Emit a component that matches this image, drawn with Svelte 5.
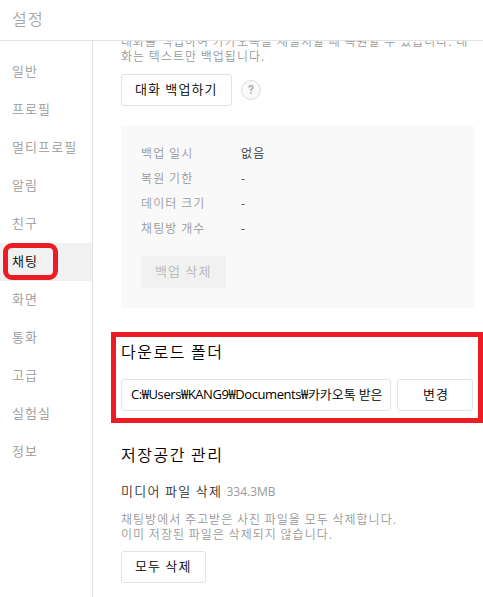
<script lang="ts">
  const menu = [
    "일반",
    "프로필",
    "멀티프로필",
    "알림",
    "친구",
    "채팅",
    "화면",
    "통화",
    "고급",
    "실험실",
    "정보",
  ];
  let active = $state("채팅");

  const backup = [
    { label: "백업 일시", value: "없음" },
    { label: "복원 기한", value: "-" },
    { label: "데이터 크기", value: "-" },
    { label: "채팅방 개수", value: "-" },
  ];
</script>

<div class="window">
  <header>설정</header>
  <div class="body">
    <nav>
      {#each menu as item}
        <button
          class="item"
          class:active={item === active}
          onclick={() => (active = item)}
        >
          {item}
          {#if item === "채팅"}<span class="mark"></span>{/if}
        </button>
      {/each}
    </nav>

    <main>
      <p class="desc intro">
        대화를 백업하여 카카오톡을 재설치할 때 복원할 수 있습니다. 대<br />화는
        텍스트만 백업됩니다.
      </p>
      <div class="row">
        <button class="btn backup">대화 백업하기</button>
        <span class="help">?</span>
      </div>

      <section class="panel">
        <dl>
          {#each backup as { label, value }}
            <dt>{label}</dt>
            <dd>{value}</dd>
          {/each}
        </dl>
        <button class="btn disabled" disabled>백업 삭제</button>
      </section>

      <section class="download">
        <h2>다운로드 폴더</h2>
        <div class="row folder">
          <div class="path">
            <span class="latin">C:₩Users₩KANG9₩Documents₩</span>카카오톡 받은
          </div>
          <button class="btn change">변경</button>
        </div>
        <span class="frame"></span>
      </section>

      <section class="storage">
        <h2>저장공간 관리</h2>
        <h3>미디어 파일 삭제 <span class="size">334.3MB</span></h3>
        <p class="desc">
          채팅방에서 주고받은 사진 파일을 모두 삭제합니다.<br />이미 저장된
          파일은 삭제되지 않습니다.
        </p>
        <button class="btn">모두 삭제</button>
      </section>
    </main>
  </div>
</div>

<style>
  :global(body) {
    overflow: hidden;
    background: #fff;
  }
  .window {
    display: flex;
    flex-direction: column;
    width: 483px;
    height: 597px;
    font-family: "Noto Sans CJK KR", sans-serif;
    font-weight: 350;
    color: #000;
  }
  .window * {
    box-sizing: border-box;
  }
  button {
    font: inherit;
    color: inherit;
  }
  h2,
  h3,
  p,
  dl,
  dd {
    margin: 0;
    font-weight: inherit;
  }

  header {
    flex: none;
    height: 41px;
    padding-left: 12px;
    border-bottom: 1px solid #e2e2e2;
    font-size: 16px;
    line-height: 37px;
    letter-spacing: 1.3px;
    color: #aaa;
  }
  .body {
    display: flex;
    flex: 1;
    min-height: 0;
  }

  nav {
    display: flex;
    flex: none;
    flex-direction: column;
    width: 93px;
    padding-top: 12px;
    border-right: 1px solid #e2e2e2;
  }
  .item {
    position: relative;
    flex: none;
    height: 38px;
    padding: 0 0 4px 12px;
    border: 0;
    background: none;
    font-size: 13px;
    letter-spacing: 1.1px;
    text-align: left;
    white-space: nowrap;
    color: #999;
  }
  .item.active {
    background: #f1f1f1;
    color: #000;
  }
  .mark {
    position: absolute;
    top: 0;
    left: 3px;
    width: 55px;
    height: 37px;
    border: 5px solid #ed1c24;
    border-radius: 9px;
  }

  main {
    flex: 1;
    min-width: 0;
    padding-left: 28px;
    overflow: hidden;
  }
  .row {
    display: flex;
    align-items: center;
  }
  .desc {
    font-size: 12px;
    line-height: 15px;
    letter-spacing: 1.02px;
    white-space: nowrap;
    color: #999;
  }
  .intro {
    margin-top: -8px;
    padding-bottom: 11px;
  }
  .btn {
    height: 32px;
    padding: 0 0 4px 13px;
    border: 1px solid #e2e2e2;
    border-radius: 3px;
    background: #fff;
    font-size: 13px;
    letter-spacing: 1.15px;
    text-align: left;
    white-space: nowrap;
  }
  .btn.backup {
    width: 111px;
  }
  .help {
    width: 20px;
    height: 20px;
    margin-left: 9px;
    border: 1px solid #ddd;
    border-radius: 50%;
    background: #f9f9f9;
    font: bold 12px/18px Roboto, sans-serif;
    text-align: center;
    color: #b0b0b0;
  }

  .panel {
    width: 354px;
    height: 182px;
    margin-top: 20px;
    padding: 14px 20px;
    border-radius: 2px;
    background: #f9f9f9;
  }
  dl {
    display: grid;
    grid-template-columns: 100px 1fr;
    font-size: 12px;
    line-height: 25px;
    letter-spacing: 1.1px;
  }
  dt {
    color: #999;
  }
  dd {
    color: #333;
  }
  .btn.disabled {
    width: 85px;
    margin-top: 16px;
    border-color: #f1f1f1;
    background: #f1f1f1;
    color: #b5b5b5;
  }

  h2 {
    font-size: 16px;
    line-height: 24px;
    letter-spacing: 1.5px;
  }
  .download {
    position: relative;
    margin-top: 31px;
  }
  .folder {
    gap: 6px;
    margin-top: 16px;
  }
  .path {
    width: 270px;
    height: 32px;
    padding-left: 9px;
    border: 1px solid #e2e2e2;
    border-radius: 3px;
    overflow: hidden;
    font-size: 13px;
    line-height: 28px;
    white-space: nowrap;
  }
  .latin {
    font-family: "Open Sans", "Noto Sans CJK KR", sans-serif;
    font-weight: 400;
    letter-spacing: -0.42px;
  }
  .btn.change {
    width: 76px;
    padding-left: 25px;
  }
  /* highlight around the folder setting */
  .frame {
    position: absolute;
    top: -7px;
    left: -10px;
    width: 372px;
    height: 91px;
    border: 5px solid #ed1c24;
    pointer-events: none;
  }

  .storage {
    margin-top: 31px;
  }
  h3 {
    margin: 15px 0 9px;
    font-size: 13px;
    line-height: 20px;
    letter-spacing: 1.3px;
    white-space: nowrap;
    color: #333;
  }
  .size {
    font-family: "Open Sans", sans-serif;
    font-size: 12px;
    font-weight: 400;
    letter-spacing: 0;
    color: #999;
  }
  .storage .btn {
    width: 85px;
    margin-top: 10px;
  }
</style>
